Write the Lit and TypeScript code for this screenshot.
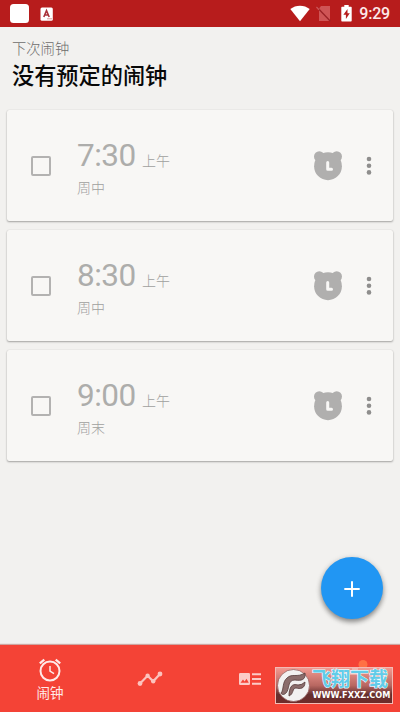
import { LitElement, html, css } from "lit";
import { customElement, property } from "lit/decorators.js";

const ALARMS = [
  { time: "7:30", period: "上午", days: "周中" },
  { time: "8:30", period: "上午", days: "周中" },
  { time: "9:00", period: "上午", days: "周末" },
];

@customElement("status-bar")
class StatusBar extends LitElement {
  static styles = css`
    :host { display: flex; align-items: center; height: 27px; background: #b71c1c; padding: 0 10px 0 10px; box-sizing: border-box; flex: none; }
    .app { width: 19px; height: 19px; border-radius: 3.5px; background: #fff; margin-right: 11px; }
    .space { flex: 1; }
    .clock { font: 500 16px/27px Roboto, sans-serif; color: #fde9e9; width: 30px; white-space: nowrap; display: flex; justify-content: flex-end; letter-spacing: -.2px; }
    svg { display: block; }
    .wifi { margin-right: 6px; }
    .sim { margin-right: 9px; }
    .battery { margin-right: 8px; }
  `;
  render() {
    return html`
      <div class="app"></div>
      <svg width="13" height="14" viewBox="0 0 13 14"><rect x=".5" y=".5" width="12.3" height="13.3" rx="1.5" fill="#fff"/><path d="M3.8 10 6.5 3.6 9.2 10M4.6 8h3.8" fill="none" stroke="#a9323a" stroke-width="1.6"/><path d="M7 11.8h5" stroke="#d99" stroke-width="1"/></svg>
      <div class="space"></div>
      <svg class="wifi" width="20" height="17" viewBox="0 0 20 17"><path d="M.3 4.1C5.8-.4 14.2-.4 19.7 4.1L10 16.2Z" fill="#fff"/></svg>
      <svg class="sim" width="16" height="17" viewBox="0 0 16 17"><path d="M5 1h9v15H3V3.500Z" fill="#cf5556"/><path d="M.8 2 14.400 16.200" stroke="#9a2226" stroke-width="1.300"/><path d="M.4 2 3 4.700" stroke="#cf5556" stroke-width="1.400"/></svg>
      <svg class="battery" width="11" height="17" viewBox="0 0 11 17"><path d="M3.3 0h4.4v1.8H10q.7 0 .7.7v13.3q0 .7-.7.7H1q-.7 0-.7-.7V2.500q0-.7.7-.7h2.300Z" fill="#fff"/><path d="M6.500 4 2.400 9.800h2.500V14L8.800 8.200H6.500Z" fill="#b71c1c"/></svg>
      <div class="clock">9:29</div>
    `;
  }
}

@customElement("alarm-card")
class AlarmCard extends LitElement {
  @property() time = "";
  @property() period = "";
  @property() days = "";
  static styles = css`
    :host { display: flex; align-items: center; height: 111px; box-sizing: border-box; padding: 0 21px 0 24px; border-radius: 2px; background: #f8f7f5; box-shadow: 0 1px 2px rgba(0,0,0,.32), 0 0 1px rgba(0,0,0,.16); color: #adadab; font-family: Roboto, "Noto Sans CJK SC", sans-serif; }
    .check { width: 20px; height: 20px; box-sizing: border-box; border: 2px solid #b3b2b1; border-radius: 2px; }
    .info { flex: 1; margin-left: 26px; padding-top: 5px; }
    .line { display: flex; align-items: baseline; height: 36px; }
    .time { font-size: 31.500px; line-height: 36px; width: 65px; letter-spacing: -.5px; }
    .period { font-size: 14px; line-height: 20px; font-weight: 300; color: #a0a09e; }
    .days { font-size: 14px; line-height: 20px; margin-top: 4px; font-weight: 300; color: #a0a09e; }
    .bear { margin-right: 24px; }
    svg { display: block; }
  `;
  render() {
    return html`
      <div class="check"></div>
      <div class="info">
        <div class="line"><span class="time">${this.time}</span><span class="period">${this.period}</span></div>
        <div class="days">${this.days}</div>
      </div>
      <svg class="bear" width="28" height="30" viewBox="0 0 28 30">
        <g fill="#b0afae"><circle cx="5.300" cy="5.600" r="5.300"/><circle cx="22.700" cy="5.600" r="5.300"/><ellipse cx="14" cy="15.200" rx="13.900" ry="14"/></g>
        <path d="M13.700 11.500v6.800h3.800" fill="none" stroke="#f8f7f5" stroke-width="3" stroke-linecap="round" stroke-linejoin="round"/>
      </svg>
      <svg width="6" height="20" viewBox="0 0 6 20" fill="#8f8e8d"><circle cx="3" cy="3" r="2.300"/><circle cx="3" cy="9.700" r="2.300"/><circle cx="3" cy="16.400" r="2.300"/></svg>
    `;
  }
}

@customElement("nav-bar")
class NavBar extends LitElement {
  static styles = css`
    :host { display: grid; grid-template-columns: repeat(4, 1fr); height: 67px; background: #f44336; flex: none; box-shadow: 0 -1px 1px rgba(150,50,40,.4); }
    .item { display: flex; flex-direction: column; align-items: center; justify-content: center; }
    .active { justify-content: flex-start; padding-top: 13px; color: #ffebe9; font: 400 13.500px/18px Roboto, "Noto Sans CJK SC", sans-serif; }
    .active span { margin-top: 2px; }
    svg { display: block; }
  `;
  render() {
    return html`
      <div class="item active">
        <svg width="24" height="24" viewBox="0 0 24 24" fill="none" stroke="#ffebe9"><circle cx="12" cy="13" r="9.500" stroke-width="2"/><path d="M12 8v5.200l4 2.400" stroke-width="1.500"/><path d="M1.800 5.400 6.300 1.600M22.200 5.400 17.700 1.600" stroke-width="2.200"/></svg>
        <span>闹钟</span>
      </div>
      <div class="item">
        <svg width="26" height="16" viewBox="0 0 26 16" fill="#fcc2bd"><path d="M3 12.500 10.600 4.700 16.200 10.300 23 3" fill="none" stroke="#fcc2bd" stroke-width="2.200"/><circle cx="3" cy="12.500" r="2.400"/><circle cx="10.600" cy="4.700" r="2.200"/><circle cx="16.200" cy="10.300" r="2.200"/><circle cx="23" cy="3" r="2.400"/></svg>
      </div>
      <div class="item">
        <svg width="22" height="12" viewBox="0 0 22 12"><rect width="11" height="12" rx="1.200" fill="#fccbc7"/><path d="M1.500 9.700 4 6.600 5.600 8.400 7.500 5.800l2.300 3.900Z" fill="#f44336"/><path d="M13 1.200h9M13 6h9M13 10.800h9" stroke="#fccbc7" stroke-width="2"/></svg>
      </div>
      <div class="item"></div>
    `;
  }
}

@customElement("site-mark")
class SiteMark extends LitElement {
  static styles = css`
    :host { display: block; }
    svg { display: block; overflow: visible; }
    .cn { font: 700 19px "Noto Sans CJK SC", sans-serif; }
    .url { font: 700 8.500px "DejaVu Sans", "Liberation Sans", sans-serif; }
  `;
  render() {
    return html`
      <svg width="118" height="44" viewBox="0 0 118 44">
        <defs><linearGradient id="plate" x1="0" y1="0" x2="0" y2="1"><stop offset="0" stop-color="#f49a91"/><stop offset=".5" stop-color="#b86761"/><stop offset=".75" stop-color="#65302f"/><stop offset="1" stop-color="#702b29"/></linearGradient></defs>
        <circle cx="88" cy="4.500" r="4.500" fill="#ff7145"/>
        <rect x=".5" y="7.500" width="117" height="36" fill="url(#plate)" stroke="#f3bbb5"/>
        <path d="M70 12h7v-4h6v7h-8v6h-5Z" fill="#f4c5bd" opacity=".65"/>
        <circle cx="18.500" cy="25.500" r="16" fill="#f2f1f1" stroke="#8d5553" stroke-width=".7"/>
        <g fill="#8b6d6c" stroke="#563a3a" stroke-width=".8">
          <path d="M6 33C9 30 7 22 12 18C17 13 22 18 30 13C31 20 26 21 20 20C12 20 15 29 11 33C9 35 7 35 6 33Z"/>
          <path d="M14 34C15 24 19 24 23 25Q27 25 30 22C30 29 25 29 21 28C17 28 19 34 14 36Z"/>
        </g>
        <text class="cn" x="37" y="25.500" textLength="76" lengthAdjust="spacingAndGlyphs" fill="#61cce9" stroke="#eefaff" stroke-width="1.200" paint-order="stroke">飞翔下载</text>
        <text class="url" x="37.500" y="37.500" textLength="78" lengthAdjust="spacingAndGlyphs" fill="#fff">WWW.FXXZ.COM</text>
      </svg>
    `;
  }
}

@customElement("app-root")
class AppRoot extends LitElement {
  static styles = css`
    :host { display: flex; flex-direction: column; position: relative; width: 400px; height: 712px; overflow: hidden; background: #f2f1ef; font-family: "Noto Sans CJK SC", sans-serif; }
    header { padding: 11px 12px 0; height: 83px; box-sizing: border-box; flex: none; }
    .label { font-size: 14.300px; line-height: 20px; color: #6e6d6c; font-weight: 300; }
    .title { font-size: 22.200px; line-height: 32px; color: #080808; font-weight: 500; }
    main { flex: 1; padding: 0 7px; display: flex; flex-direction: column; gap: 9px; }
    .add { position: absolute; right: 17px; bottom: 93px; width: 62px; height: 62px; border-radius: 50%; border: 0; padding: 1px 0 0; background: #2196f3; box-shadow: 0 3px 5px rgba(0,0,0,.38), 0 1px 6px rgba(0,0,0,.12); display: grid; place-items: center; }
    site-mark { position: absolute; left: 275px; bottom: 8px; }
  `;
  render() {
    return html`
      <status-bar></status-bar>
      <header><div class="label">下次闹钟</div><div class="title">没有预定的闹钟</div></header>
      <main>${ALARMS.map(a => html`<alarm-card .time=${a.time} .period=${a.period} .days=${a.days}></alarm-card>`)}</main>
      <nav-bar></nav-bar>
      <button class="add" aria-label="+"><svg width="16" height="16" viewBox="0 0 16 16"><path d="M8 .3v15.400M.3 8h15.400" stroke="#fff" stroke-width="2"/></svg></button>
      <site-mark></site-mark>
    `;
  }
}
